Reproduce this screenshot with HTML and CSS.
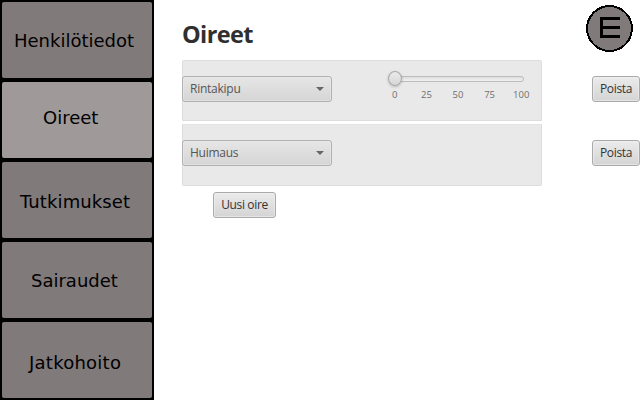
FILE: index.html
```html
<!DOCTYPE html>
<html lang="fi">
<head>
<meta charset="utf-8">
<title>Oireet</title>
<link rel="stylesheet" href="styles.css">
</head>
<body>
<div class="app">
  <nav class="sidebar">
    <a class="tab tab-patient"><span>Henkilötiedot</span></a>
    <a class="tab tab-symptoms active"><span>Oireet</span></a>
    <a class="tab tab-exams"><span>Tutkimukset</span></a>
    <a class="tab tab-diseases"><span>Sairaudet</span></a>
    <a class="tab tab-care"><span>Jatkohoito</span></a>
  </nav>
  <main class="content">
    <header class="header">
      <h1>Oireet</h1>
      <svg class="logo" width="48" height="48" viewBox="0 0 48 48" shape-rendering="crispEdges">
        <circle cx="23.5" cy="24.5" r="22.4" fill="#817a7a" stroke="#000" stroke-width="2"/>
        <path d="M14 13H34V16H17V22H34V25H17V31H34V34H14Z" fill="#000"/>
      </svg>
    </header>
    <section class="row">
      <div class="card card-first">
        <div class="combo"><span>Rintakipu</span><i class="arrow"></i></div>
        <div class="slider">
          <div class="track"><i class="thumb"></i></div>
          <div class="ticks"><span>0</span><span>25</span><span>50</span><span>75</span><span>100</span></div>
        </div>
      </div>
      <button class="button remove">Poista</button>
    </section>
    <section class="row">
      <div class="card card-last">
        <div class="combo"><span>Huimaus</span><i class="arrow"></i></div>
      </div>
      <button class="button remove">Poista</button>
    </section>
    <button class="button add">Uusi oire</button>
  </main>
</div>
</body>
</html>
```
FILE: styles.css
```css
* { box-sizing: border-box; }
body { margin: 0; background: #fff; font-family: "Open Sans", "Noto Sans", sans-serif; }
.app { display: flex; width: 640px; height: 400px; overflow: hidden; }
.sidebar {
  width: 154px; height: 400px; padding: 2px; background: #000;
  display: flex; flex-direction: column; gap: 4px;
}
.tab {
  height: 76px; border-radius: 2px; background: #817a7a; color: #000;
  font: 18px/22px "DejaVu Sans", sans-serif; white-space: nowrap;
}
.tab.active { background: #9f9999; }
.tab span { display: block; }
.tab-patient { padding: 28px 0 0 12px; }
.tab-symptoms { padding: 25px 0 0 41px; }
.tab-exams { padding: 29px 0 0 18px; letter-spacing: .1px; }
.tab-diseases { padding: 28px 0 0 29px; }
.tab-care { padding: 30px 0 0 27px; letter-spacing: .25px; }

.content { width: 486px; padding-left: 28px; }
.header { display: flex; justify-content: space-between; height: 60px; padding: 4px 6px 0 0; }
h1 { margin: 14px 0 0; font-size: 23.5px; line-height: 32px; color: #2f2f2f; letter-spacing: -.6px; }
.logo { display: block; }

.row { display: flex; }
.card {
  width: 360px; display: flex; align-items: flex-start;
  background: #e9e9e9; border: 1px solid #ddd;
}
.card-first { height: 61px; padding-top: 15px; border-radius: 2px 2px 0 0; margin-bottom: 3px; }
.card-last { height: 62px; padding-top: 15px; border-top-color: #e4e4e4; border-radius: 0 0 2px 2px; }
.combo {
  width: 150px; height: 26px; margin-left: -1px; padding: 0 7px;
  display: flex; align-items: center; justify-content: space-between;
  border: 1px solid #b1b1b1; border-radius: 3px;
  background: linear-gradient(#e6e6e6, #d5d5d5); box-shadow: inset 0 0 0 1px #ececec80;
  font-size: 12px; letter-spacing: -.25px; color: #555;
}
.combo span { margin-top: -1px; }
.arrow { border: 4px solid transparent; border-top-color: #666; border-bottom: 0; }

.slider { width: 140px; margin: -5px 0 0 56px; }
.track {
  position: relative; width: 131px; height: 6px; margin: 5px 0 0 5px;
  border: 1px solid #bcbcbc; border-radius: 3px; background: linear-gradient(#dedede, #f1f1f1);
}
.thumb {
  position: absolute; left: -6px; top: -6px; width: 14px; height: 15px;
  border: 1px solid #a8a8a8; border-radius: 50%;
  background: linear-gradient(#ebebeb, #d6d6d6); box-shadow: 0 1px 3px #0003;
}
.ticks {
  display: flex; margin: 6px 0 0 -9px;
  font-size: 9.5px; line-height: 14px; color: #6f6f6f;
}
.ticks span { flex: 0 0 31.6px; text-align: center; }

.button {
  height: 26px; padding: 0; border: 1px solid #aaa; border-radius: 3px;
  background: linear-gradient(#ebebeb, #d4d4d4); box-shadow: inset 0 0 0 1px #f4f4f480;
  font: 12px/24px "Open Sans", "Noto Sans", sans-serif; letter-spacing: -.35px;
  color: #333; white-space: nowrap;
}
.remove { width: 48px; margin: 16px 0 0 50px; }
.add { display: block; width: 63px; margin: 6px 0 0 31px; }
```
